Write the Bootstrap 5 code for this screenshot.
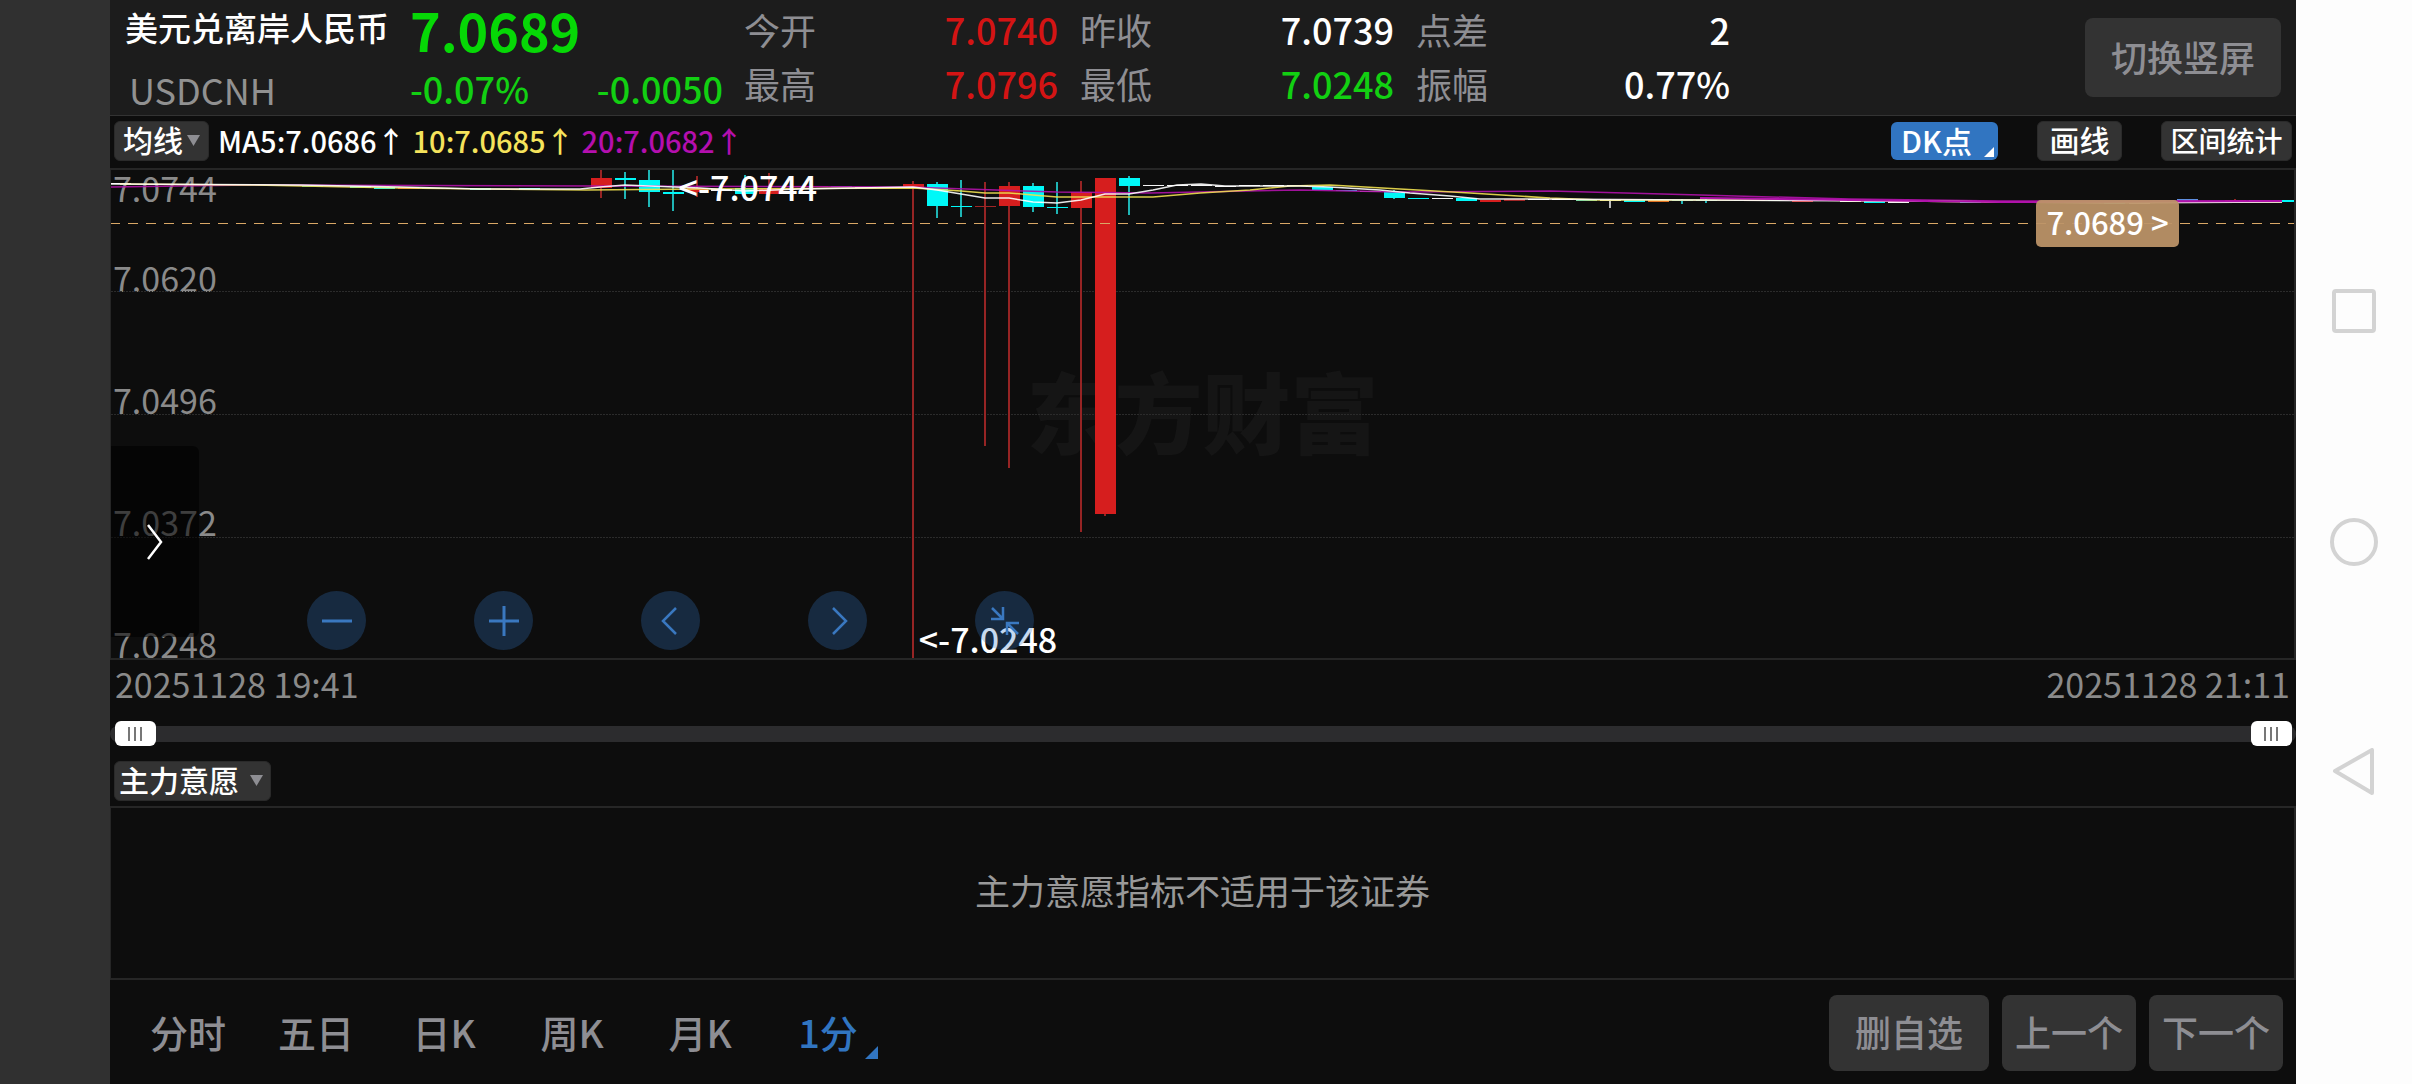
<!DOCTYPE html>
<html lang="zh-CN">
<head>
<meta charset="utf-8">
<meta name="viewport" content="width=device-width, initial-scale=1">
<title>美元兑离岸人民币 USDCNH</title>
<link href="https://cdn.jsdelivr.net/npm/bootstrap@5.3.0/dist/css/bootstrap.min.css" rel="stylesheet">
<style>
:root{--ink:#0d0d0d;--line:#262626;--muted:#8e8e93;--chip:#333;--up:#d41414;--down:#12d012;--blue:#3175c1}
body{font-family:"Noto Sans CJK SC","Noto Sans",sans-serif;font-weight:500;background:var(--ink);color:#fff;overflow-x:hidden}
button{font-weight:500}
.side-strip{width:110px;background:#303030}
.sys-nav{width:116px;background:#fdfdfd;gap:182px}
.sys-nav button{width:48px;height:48px}
.bare{background:none;border:0;padding:0;display:block;color:inherit}
.quote-head{height:116px;background:#1c1c1c;border-bottom:1px solid #333;padding:0 15px 0 15px}
.q-name{width:285px}
.q-name h1{font-size:33px;line-height:54px;font-weight:500;margin:0}
.q-code{font-size:36px;line-height:70px;color:#919191;padding-left:4px;font-weight:400}
.q-price{width:313px}
.price-big{font-size:52px;line-height:60px;font-weight:700;color:#06d806}
.price-sub{font-size:36px;line-height:56px}
.stats{gap:22px;margin-left:21px;padding-top:2px}
.stat-col{width:314px;font-size:36px;line-height:54px}
.stat-col dt{font-weight:400;color:var(--muted)}
.stat-col dd{margin:0}
.up{color:var(--up)}.down{color:var(--down)}
.pad-btn{background:var(--chip);color:var(--muted);border:0;border-radius:8px;font-size:36px;line-height:52px;padding:0 0 3px}
.rotate-btn{width:196px;height:79px;margin-top:18px}
.ma-bar{height:52px;padding:5px 4px 0}
.chip{background:var(--chip);color:#fff;border:1px solid #2a2a2a;border-radius:6px;font-size:30px;line-height:36px;height:40px;padding:0 8px 4px;display:flex;align-items:center}
.chip svg{margin-top:3px}
.chip-dk{background:var(--blue);border:0;height:38px;width:107px;padding:0 4px 3px 10px;margin-right:39px}
.chip-draw{width:85px;justify-content:center;margin-right:39px}
.chip-range{width:131px;justify-content:center;font-size:28px;padding:0 0 3px}
.ma-text{font-size:29px;line-height:39px;gap:7px;margin-left:9px}
.chart-box{min-height:492px;border:2px solid var(--line);border-left-width:1px}
.chart-box .plot{position:absolute;inset:0;width:100%;height:100%}
.wmark{position:absolute;inset:0;font-size:88px;font-weight:900;color:#151515;padding-bottom:10px}
.axis{position:absolute;inset:0 auto 0 2px;font-size:34px;line-height:28px;color:#8a8a8a;font-weight:400}
.axis span{flex:1;display:flex;align-items:flex-end}
.axis .axis-top{position:absolute;top:4px}
.mark-txt{position:absolute;font-size:34px;line-height:34px}
.mark-hi{left:26%;top:0}
.mark-lo{left:37%;bottom:2px}
.price-tag{position:absolute;right:115px;top:30px;width:143px;height:47px;border:0;border-radius:5px;background:rgba(188,148,104,.94);color:#fff;font-size:31px;line-height:40px;padding:0 0 4px}
.drawer{position:absolute;left:0;top:276px;width:88px;height:191px;background:rgba(0,0,0,.55);border:0;border-radius:0 6px 6px 0;padding:0}
.zoom-tools{position:absolute;left:196px;bottom:8px;gap:108px}
.zoom-tools button{width:59px;height:59px;border:0;border-radius:50%;background:rgba(49,118,198,.28);padding:0}
.zoom-tools svg,.sys-nav svg,.drawer svg{display:block;margin:auto}
.dates{font-size:34px;line-height:48px;color:#8a8a8a;padding:0 6px 12px 5px;font-weight:400}
.span-slider{height:26px;position:relative}
.span-slider::before{content:"";position:absolute;inset:6px 0 4px;border-radius:8px;background:#2c2c2e}
.span-slider input{position:absolute;left:5px;right:5px;top:0;width:calc(100% - 9px);height:26px;margin:0;background:none;-webkit-appearance:none;appearance:none;pointer-events:none}
.span-slider input::-webkit-slider-thumb{-webkit-appearance:none;pointer-events:auto;width:41px;height:25px;border-radius:6px;
background:linear-gradient(#777,#777) 13px 6px/2px 14px no-repeat,linear-gradient(#777,#777) 19px 6px/2px 14px no-repeat,linear-gradient(#777,#777) 25px 6px/2px 14px no-repeat,#fff}
.ind-row{padding:15px 4px 5px}
.ind-chip{width:157px;padding:0 7px 5px 4px}
.ind-panel{height:174px;border:2px solid var(--line);border-left-width:1px;font-size:35px;color:#999;font-weight:400;padding-bottom:5px}
.foot{height:104px;padding:1px 13px 0 14px}
.tabs-k{padding-bottom:2px}
.tabs-k button{width:128px;font-size:38px;line-height:56px;color:var(--muted);text-align:center}
.tabs-k .now{color:var(--blue);position:relative}
.tabs-k .now svg{position:absolute;right:14px;bottom:1px}
.foot-btns{gap:13px}
.foot-btns button{height:76px;width:134px}
.foot-btns .wide{width:160px}
</style>
<script src="https://cdn.jsdelivr.net/npm/bootstrap@5.3.0/dist/js/bootstrap.bundle.min.js"></script>
</head>
<body>
<div class="d-flex min-vh-100">
  <div class="side-strip flex-shrink-0"></div>
  <main class="d-flex flex-column flex-grow-1">
    <header class="quote-head d-flex align-items-start">
      <div class="q-name"><h1>美元兑离岸人民币</h1><div class="q-code">USDCNH</div></div>
      <div class="q-price">
        <div class="price-big">7.0689</div>
        <div class="price-sub d-flex justify-content-between down"><span>-0.07%</span><span>-0.0050</span></div>
      </div>
      <div class="stats d-flex">
        <dl class="stat-col m-0">
          <div class="d-flex justify-content-between"><dt>今开</dt><dd class="up">7.0740</dd></div>
          <div class="d-flex justify-content-between"><dt>最高</dt><dd class="up">7.0796</dd></div>
        </dl>
        <dl class="stat-col m-0">
          <div class="d-flex justify-content-between"><dt>昨收</dt><dd>7.0739</dd></div>
          <div class="d-flex justify-content-between"><dt>最低</dt><dd class="down">7.0248</dd></div>
        </dl>
        <dl class="stat-col m-0">
          <div class="d-flex justify-content-between"><dt>点差</dt><dd>2</dd></div>
          <div class="d-flex justify-content-between"><dt>振幅</dt><dd>0.77%</dd></div>
        </dl>
      </div>
      <button type="button" class="pad-btn rotate-btn ms-auto">切换竖屏</button>
    </header>

    <div class="ma-bar d-flex align-items-start">
      <button type="button" class="chip">均线<svg class="ms-1" width="13" height="11" viewBox="0 0 13 11"><path d="M0 0h13L6.500 11z" fill="#8e8e93"/></svg></button>
      <div class="ma-text d-flex">
        <span>MA5:7.0686↑</span><span style="color:#f5e35c">10:7.0685↑</span><span style="color:#b40fae">20:7.0682↑</span>
      </div>
      <div class="d-flex ms-auto align-items-center">
        <button type="button" class="chip chip-dk justify-content-between">DK点<svg class="align-self-end" width="10" height="10" viewBox="0 0 10 10"><path d="M10 0v10H0z" fill="#fff"/></svg></button>
        <button type="button" class="chip chip-draw">画线</button>
        <button type="button" class="chip chip-range">区间统计</button>
      </div>
    </div>

    <section class="chart-box position-relative flex-grow-1" aria-label="1分钟K线">
      <div class="wmark d-flex align-items-center justify-content-center">东方财富</div>
      <div class="axis d-flex flex-column"><span class="axis-top">7.0744</span><span>7.0620</span><span>7.0496</span><span>7.0372</span><span>7.0248</span></div>
      <svg class="plot" id="plot" viewBox="111 170 2183 488" preserveAspectRatio="none"></svg>
      <div class="mark-txt mark-hi">&lt;-7.0744</div>
      <div class="mark-txt mark-lo">&lt;-7.0248</div>
      <button type="button" class="price-tag">7.0689 &gt;</button>
      <button type="button" class="drawer" aria-label="展开"><svg width="18" height="36" viewBox="0 0 18 36" fill="none" stroke="#fff" stroke-width="2.500"><path d="M2 1l13 17L2 35"/></svg></button>
      <div class="zoom-tools d-flex">
        <button type="button" aria-label="缩小"><svg width="30" height="30" fill="none" stroke="#3a78c0" stroke-width="3"><path d="M0 15h30"/></svg></button>
        <button type="button" aria-label="放大"><svg width="30" height="30" fill="none" stroke="#3a78c0" stroke-width="3"><path d="M0 15h30M15 0v30"/></svg></button>
        <button type="button" aria-label="左移"><svg width="30" height="30" fill="none" stroke="#3a78c0" stroke-width="2.500"><path d="M20 2L7 15l13 13"/></svg></button>
        <button type="button" aria-label="右移"><svg width="30" height="30" fill="none" stroke="#3a78c0" stroke-width="2.500"><path d="M10 2l13 13-13 13"/></svg></button>
        <button type="button" aria-label="收起"><svg width="30" height="30" fill="none" stroke="#3a78c0" stroke-width="2.500"><path d="M2 2l11 11M1 13h12V1M28 28L17 17M29 17H17v12"/></svg></button>
      </div>
    </section>

    <div class="dates d-flex justify-content-between"><span>20251128 19:41</span><span>20251128 21:11</span></div>
    <div class="span-slider">
      <input type="range" min="0" max="100" value="0" aria-label="起始时间">
      <input type="range" min="0" max="100" value="100" aria-label="结束时间">
    </div>
    <div class="ind-row">
      <button type="button" class="chip ind-chip justify-content-between">主力意愿<svg width="13" height="11" viewBox="0 0 13 11"><path d="M0 0h13L6.500 11z" fill="#8e8e93"/></svg></button>
    </div>
    <div class="ind-panel d-flex align-items-center justify-content-center">主力意愿指标不适用于该证券</div>

    <footer class="foot d-flex align-items-center justify-content-between">
      <nav class="tabs-k d-flex">
        <button type="button" class="bare">分时</button>
        <button type="button" class="bare">五日</button>
        <button type="button" class="bare">日K</button>
        <button type="button" class="bare">周K</button>
        <button type="button" class="bare">月K</button>
        <button type="button" class="bare now">1分<svg width="13" height="13" viewBox="0 0 13 13"><path d="M13 0v13H0z" fill="#3175c1"/></svg></button>
      </nav>
      <div class="foot-btns d-flex">
        <button type="button" class="pad-btn wide">删自选</button>
        <button type="button" class="pad-btn">上一个</button>
        <button type="button" class="pad-btn">下一个</button>
      </div>
    </footer>
  </main>
  <aside class="sys-nav flex-shrink-0 d-flex flex-column align-items-center justify-content-center">
    <button type="button" class="bare" aria-label="最近任务"><svg width="48" height="48" fill="none" stroke="#d3d3d3" stroke-width="4"><rect x="4" y="3" width="40" height="40" rx="2"/></svg></button>
    <button type="button" class="bare" aria-label="主屏幕"><svg width="48" height="48" fill="none" stroke="#d3d3d3" stroke-width="4"><circle cx="24" cy="24" r="22"/></svg></button>
    <button type="button" class="bare" aria-label="返回"><svg width="48" height="48" fill="none" stroke="#d3d3d3" stroke-width="4" stroke-linejoin="round"><path d="M42 2v43L5 23z"/></svg></button>
  </aside>
</div>
<script>
const R='#d61e1e',C='#00f8f8',W='#f4f4f4',D='#1fb5b5',K='#a02626';
// [index, colour, body top, body bottom, wick top, wick bottom]
const candles=[[0,W,183,184],[8,D,186,187],[10,C,186,188],[11,C,187,189],[12,R,187,189],[13,D,188,189],[14,W,188,189],[15,C,188,190],[17,C,188,190],
[20,R,178,188,169,198],[21,C,178,180,172,199],[22,C,180,192,170,207],[23,C,192,194,169,211],[24,R,188,192,176,197],[25,W,189,191],[26,C,188,194,175,196],[27,R,189,194,173,196],
[28,K,186,187],[29,K,186,187],[30,'#5f8fe0',186,187],[31,W,187,188],[32,K,187,188],[33,R,184,187,181,660],[34,C,184,206,182,218],[35,C,206,207,180,217],[36,K,206,207,182,446],
[37,R,186,206,182,468],[38,C,186,207,183,212],[39,C,207,208,182,214],[40,R,192,208,181,532],[41,R,178,514,178,516],[42,C,178,186,176,215],
[43,W,185,186],[44,W,185,186],[45,W,185,186],[46,W,186,187],[47,W,185,186],[48,W,185,186],[49,W,185,186],[50,C,187,190],[51,C,190,191],[52,W,191,192],[53,C,192,198,190,199],
[54,C,198,199],[55,W,198,199],[56,C,198,201],[57,R,200,202],[58,K,199,201],[59,W,199,200],[60,W,199,200],[61,'#7fd8a0',200,201],[62,W,200,201,199,208],[63,C,200,202],
[64,'#e07020',200,202],[65,D,200,201,199,204],[66,D,200,201,199,203],[68,R,200,201],[69,D,200,201],[70,R,200,202],[71,D,200,201],[72,W,201,202],[73,C,201,203],[74,W,201,203],[75,C,200,202],
[76,W,201,202],[77,C,201,203],[78,R,201,203],[79,W,202,203],[80,W,202,203],[81,D,202,203],[82,R,202,203],[83,C,202,204],[84,W,203,204],[85,R,200,201],[86,'#5f8fe0',199,201],[88,R,200,201,199,202],[89,W,200,202],[90,C,200,202]];
const averages=[
['#b012aa','111,187 250,185 600,186 913,187 937,188 1057,192 1150,193 1300,190 1350,191 1400,192 1550,191 1700,195 1850,199 2000,201 2282,201'],
['#f0e050','120,184 250,185 400,188 586,190 700,189 913,188 961,191 985,193 1009,193 1033,195 1057,197 1153,197 1200,193 1250,190 1290,186 1330,185 1400,189 1470,193 1550,198 1600,200 1800,200 2000,202 2282,202'],
['#ffffff','111,184 300,185 400,187 480,189 580,189 600,187 625,185 649,186 700,188 745,191 800,189 913,187 937,190 961,194 985,198 1009,198 1033,202 1057,203 1081,200 1105,194 1129,194 1153,190 1177,185 1201,184 1225,186 1300,186 1330,187 1380,190 1410,193 1450,196 1480,199 1530,199 1700,200 1900,201 2100,203 2282,202']];
let s='';
for(const y of [291,414,537]) s+=`<path d="M111 ${y}.5H2294" stroke="#2b2b2b" stroke-dasharray="2 1"/>`;
for(const [i,c,a,b,t,u] of candles){
  const x=Math.round(120+i*24.03);
  if(t) s+=`<rect x="${x-1}" y="${t}" width="2" height="${u-t}" fill="${c===R||c===K?'#962424':c===C||c===D?D:'#bbb'}"/>`;
  s+=`<rect x="${x-10}" y="${a}" width="21" height="${b-a}" fill="${c}"/>`;
}
for(const [c,p] of averages) s+=`<polyline points="${p}" fill="none" stroke="${c}" stroke-opacity=".9" stroke-width="1.5"/>`;
s+='<path d="M1700 198L1850 200 2000 202 2282 201" fill="none" stroke="#b012aa" stroke-width="2"/>';
s+='<path d="M110 223.5H2294" stroke="#d9a766" stroke-dasharray="10 8"/>';
document.getElementById('plot').innerHTML=s;
</script>
</body>
</html>
